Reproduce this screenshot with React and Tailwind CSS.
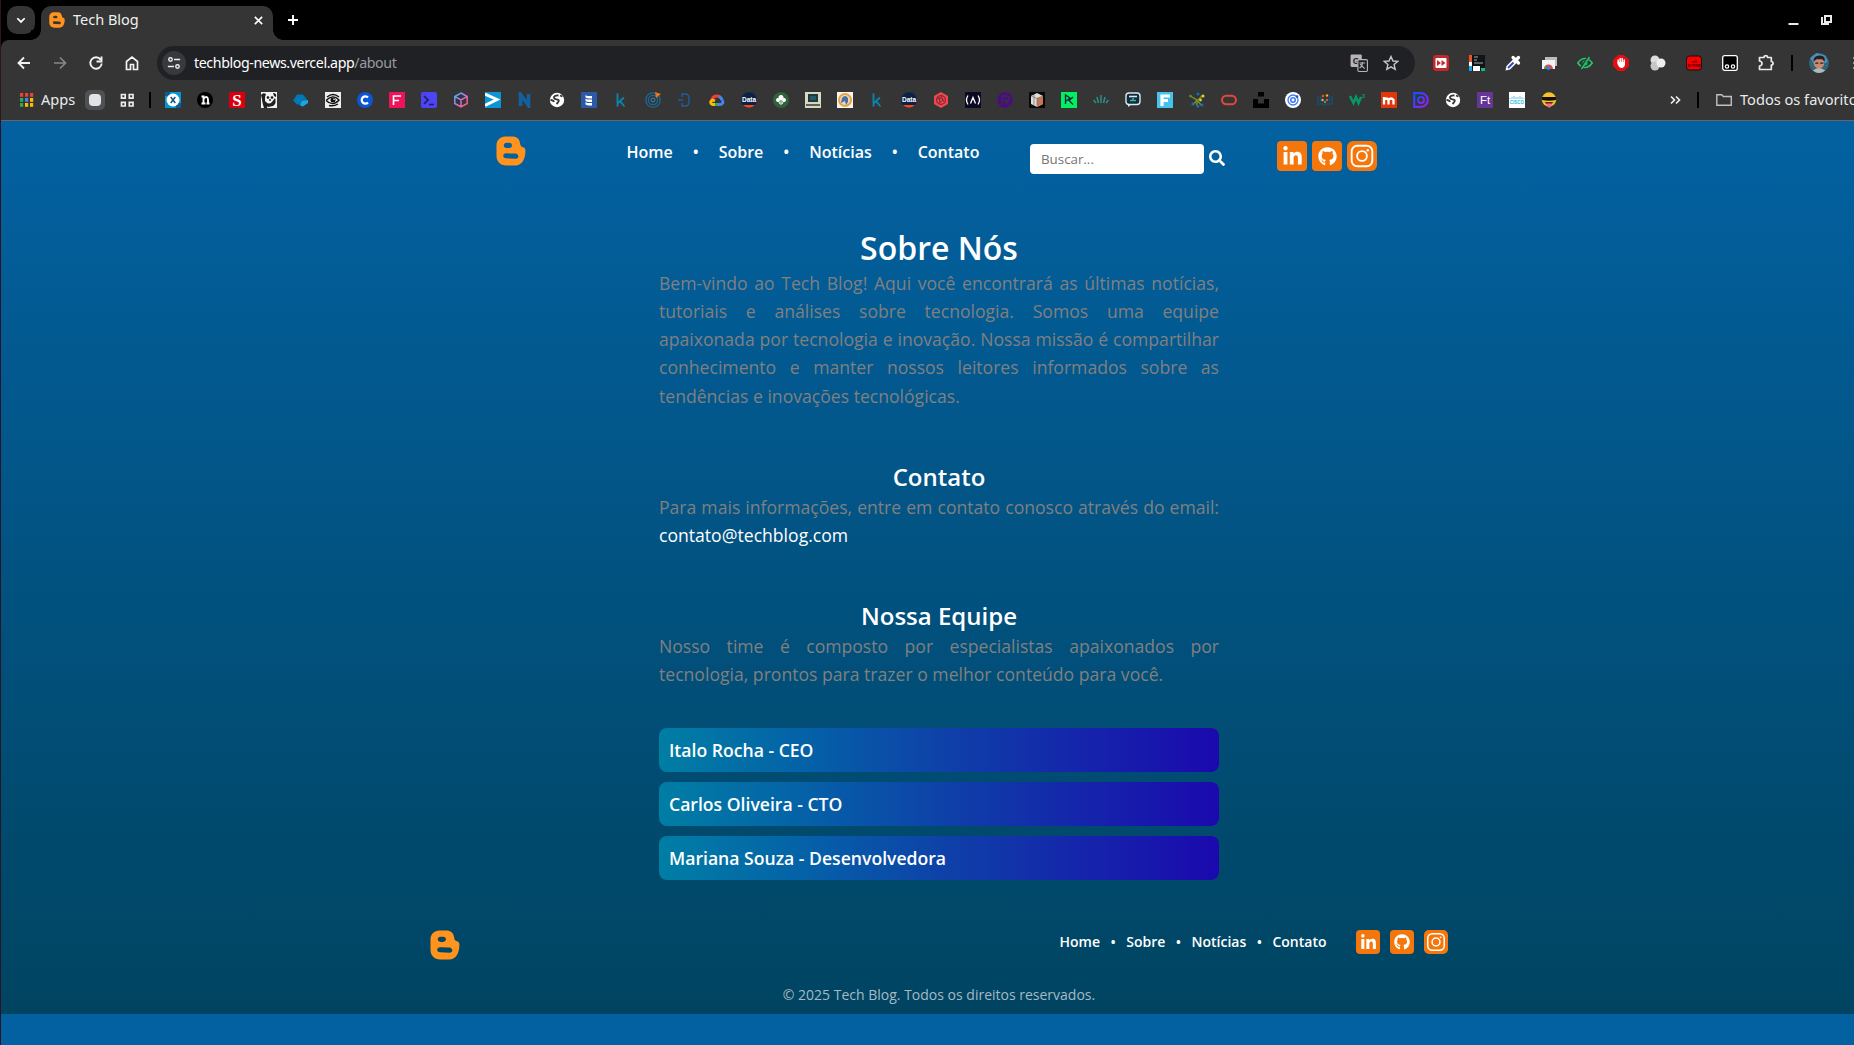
import React from "react";
import { FaGithub, FaLinkedinIn, FaSearch } from "react-icons/fa";

const Logo = ({ className }) => (
  <svg viewBox="-.5 -.2 31 30.400" className={className} fill="#ff931e" fillRule="evenodd">
    <path d="M9 0h8c5 0 7 4 7.400 7 .3 2.700 1.200 3.500 3 4 2 .5 2.600 2 2.500 4-.1 8-3.400 15-10.400 15H10C4 30 0 26 0 20V9C0 4 4 0 9 0zM10.500 6.600c-4 .2-4 5 0 5.200h2.500c4-.2 4-5 0-5.200zM10 17.400c-4 0-4 5.200 0 5.200l10 .4c4-.2 3-5-.5-5.300z" />
  </svg>
);

const Linkedin = ({ big }) => (
  <span className={`flex shrink-0 items-center justify-center rounded bg-[#f5770b] text-white ${big ? "size-[30px]" : "size-6"}`}>
    <FaLinkedinIn className={big ? "size-[21px]" : "size-[17px]"} />
  </span>
);
const Github = ({ big }) => (
  <span className={`flex shrink-0 items-center justify-center rounded bg-[#f5770b] text-white ${big ? "size-[30px]" : "size-6"}`}>
    <FaGithub className={big ? "size-[19px]" : "size-4"} />
  </span>
);
const Instagram = ({ big }) => (
  <svg viewBox="0 0 30 30" className={`shrink-0 ${big ? "size-[30px]" : "size-6"}`} fill="none" stroke="#fff">
    <rect width="30" height="30" rx="6" fill="#f5770b" stroke="none" />
    <rect x="4.700" y="4.700" width="20.600" height="20.600" rx="5.500" strokeWidth="1.900" />
    <circle cx="15" cy="15" r="4.900" strokeWidth="1.900" />
    <circle cx="20.800" cy="9.200" r="1.200" fill="#fff" stroke="none" />
  </svg>
);

const Ico = ({ children, className = "size-4" }) => (
  <svg viewBox="0 0 16 16" className={`shrink-0 ${className}`} fill="none">
    {children}
  </svg>
);

const T = ({ x = 8, y = 12.5, s = 12, f = "#fff", w = 700, serif, children }) => (
  <text x={x} y={y} fontSize={s} fill={f} fontWeight={w} textAnchor="middle" fontFamily={serif ? "Liberation Serif, serif" : "Liberation Sans, sans-serif"}>
    {children}
  </text>
);

const Globe = () => (
  <Ico>
    <circle cx="8" cy="8" r="7.200" fill="#fff" />
    <path d="M9.500 3.500c-3-.5-5 1-4.500 2.500s3.500 1 4.500 2-.5 2.500-2 4M1.500 8c2 0 3 .5 3.500 2M11 3.500l2.500 1" stroke="#353535" strokeWidth="1.800" />
  </Ico>
);
const Kaggle = () => (
  <Ico>
    <path d="M4.500 1.500v13M11 5.500L5 11M7 9.200l4.500 5.300" stroke="#0a86ab" strokeWidth="1.900" />
  </Ico>
);
const DataIcon = () => (
  <Ico>
    <circle cx="8" cy="8" r="7.800" fill="#08224a" />
    <path d="M2 13h12a8 8 0 0 1-12 0z" fill="#f04a1c" />
    <T s={6.500} y={10}>Data</T>
  </Ico>
);

const bookmarks = [
  <Ico><path d="M0 0h16v16H0z" fill="#0497d3" /><path d="M0 0h5v4H0zM11 11h5v5h-5z" fill="#0b5c97" /><circle cx="8" cy="8" r="6.500" fill="#fff" /><path d="M5.700 5l4.600 6m0-6l-4.600 6" stroke="#16507e" strokeWidth="1.500" /></Ico>,
  <Ico><circle cx="8" cy="8" r="8" fill="#000" /><path d="M4.500 4.500h2v7M6.500 6.500Q11 3 11 8v3.500M4.500 11.500h4M9.500 11.500h3" stroke="#fff" strokeWidth="1.900" /></Ico>,
  <Ico><path d="M0 0h16v16H0z" fill="#d8000f" /><T y={13.500} s={17} serif>S</T></Ico>,
  <Ico><path d="M0 0h16v16H0z" fill="#f2f2f2" /><path d="M0 3q2-3 5-1l-1 3v4l3 3-1 4H3Q1 10 1 7zM12 1q4 0 3 4l-2-1zM5 10q3 3 6 0l3-4q2 5-2 8l-5 1z" fill="#202020" /><circle cx="7" cy="5.500" r="1.300" fill="#111" /><circle cx="11" cy="5.500" r="1.300" fill="#111" /><circle cx="9" cy="8" r=".9" fill="#111" /></Ico>,
  <Ico><path d="M4 2.500h6l4 5-4 5.500-6-.5-4-4z" fill="#0078b4" /><path d="M9 9l6-1v3l-5 3.500-3-1z" fill="#1da5dc" /></Ico>,
  <Ico><path d="M0 0h16v16H0z" fill="#eee" /><path d="M2 5Q8 0 14 5M1 8.500q7-7 13-.5-6 7-13 .5M4 13.500q5 1 9-1.500" stroke="#111" strokeWidth="1.400" /><circle cx="8" cy="8" r="2.500" fill="#111" /><circle cx="9" cy="7.300" r=".8" fill="#fff" /></Ico>,
  <Ico><circle cx="8" cy="8" r="8" fill="#0b56d6" /><path d="M11 5.600A3.600 3.600 0 1 0 11 10.400" stroke="#fff" strokeWidth="2.200" /></Ico>,
  <Ico><path d="M0 0h16v16H0z" fill="#ed145b" /><path d="M4.500 13V4H12M4.500 8.500H10" stroke="#fff" strokeWidth="1.600" /></Ico>,
  <Ico><rect width="16" height="16" rx="2" fill="#4d45f5" /><path d="M3 4l4 4-4 4M8 12.500h5" stroke="#211c5c" strokeWidth="1.700" /></Ico>,
  <Ico>
    <defs><linearGradient id="cube" x1="0" y1="0" x2="1" y2="1"><stop stopColor="#1fc3f2" /><stop offset=".5" stopColor="#c870e8" /><stop offset="1" stopColor="#ff5a4e" /></linearGradient></defs>
    <path d="M8 1l6.200 3.500v7L8 15l-6.200-3.500v-7zM2 4.600L8 8l6-3.400M8 8v7" stroke="url(#cube)" strokeWidth="1.500" />
  </Ico>,
  <Ico><path d="M0 0h16v16H0z" fill="#0a95d8" /><path d="M0 2l12 5.500L0 13.500" stroke="#fff" strokeWidth="3" /></Ico>,
  <Ico><path d="M3.500 14V2.500l8 11V2" stroke="#145f9f" strokeWidth="3.600" /></Ico>,
  <Globe />,
  <Ico><rect width="16" height="16" rx="1" fill="#2c5aa8" /><path d="M4.500 2.500q0 2 6.500 1.500v2.500q-6.500 0-6.500-1.500zM4.500 6q0 2 6.500 1.500V10q-6.500 0-6.500-1.500zM4.500 9.500q0 2 6.500 1.500v2.500q-6.500 0-6.500-1.500z" fill="#fff" /></Ico>,
  <Kaggle />,
  <Ico><circle cx="8" cy="8" r="7.200" stroke="#17699b" strokeWidth="1.300" /><circle cx="8" cy="8" r="4.600" stroke="#17699b" strokeWidth="1.300" /><circle cx="8" cy="8" r="2" stroke="#2b8cc2" /><path d="M10 0l6 2-5 4z" fill="#e87722" /></Ico>,
  <Ico><path d="M5 5V2h3q4 0 4 4v4q0 4-4 4H5v-3M1 8h5" stroke="#1b5f9c" strokeWidth="1.400" /></Ico>,
  <Ico><path d="M3 8a5 5 0 0 1 8-3" stroke="#ea4335" strokeWidth="3" /><path d="M10 4.500q3 1.500 3 4" stroke="#4285f4" strokeWidth="3" /><path d="M13 8.500c2 2 0 4-2 4H8" stroke="#4285f4" strokeWidth="3" /><path d="M9 12.500H6" stroke="#34a853" strokeWidth="3" /><path d="M6 12.500H4C1 12 1 9 3.500 8L6 9" stroke="#fbbc05" strokeWidth="2.800" /></Ico>,
  <DataIcon />,
  <Ico><circle cx="8" cy="8" r="8" fill="#31623a" /><circle cx="5" cy="8" r="2" fill="#fff" /><circle cx="8" cy="5.500" r="2.500" fill="#fff" /><circle cx="11" cy="8" r="2" fill="#fff" /><path d="M8 7v6M5 8l2 4M11 8l-2 4" stroke="#fff" /></Ico>,
  <Ico><path d="M0 0h16v16H0z" fill="#d6d9bd" /><path d="M3 2h10v8H3z" fill="#233744" /><path d="M5 4h6v4H5z" fill="#225c65" /><path d="M1 12h14v2H1z" fill="#59645a" /></Ico>,
  <Ico><path d="M0 0h16v16H0z" fill="#f7f7f7" /><circle cx="8" cy="8" r="6" fill="#d8dbe0" stroke="#eda434" strokeWidth="2" /><path d="M5 6q3-4 6 0v4l-2 3-1-4-4 2z" fill="#536e93" /></Ico>,
  <Kaggle />,
  <DataIcon />,
  <Ico><path d="M8 0l7 4v8l-7 4-7-4V4z" fill="#ef4750" /><circle cx="8" cy="8" r="4.400" stroke="#842933" strokeWidth="1.200" /><path d="M8 4l2 4-4 3M4 7l5-1 2 4M6 5l1 6" stroke="#842933" /></Ico>,
  <Ico><path d="M0 0h16v16H0z" fill="#0a0a23" /><path d="M3 3.500Q0 8 3 12.500M13 3.500q3 4.500 0 9M5.500 11.500L8 5.500l2.500 6" stroke="#fff" strokeWidth="1.300" /></Ico>,
  <Ico><circle cx="8" cy="8" r="7.700" fill="#4e0a86" /><path d="M5 13V4h4q3 0 3 2.500T8 9l4 4" stroke="#353045" strokeWidth="1.800" /></Ico>,
  <Ico><path d="M0 0h16v16H0z" fill="#080808" /><path d="M2 4l6-3 6 3v8l-6 3-6-3z" fill="#e1ddd6" /><path d="M8 6v9l6-3V4z" fill="#cb7455" /><path d="M2 4l6 2.500L14 4M8 6.500V15M5 3v10" stroke="#777" strokeWidth=".8" /></Ico>,
  <Ico><path d="M0 0h16v16H0z" fill="#03ef62" /><path d="M4.500 12V3l4.500 3-4.500 3.500M12 5L8 8.500l4 4" stroke="#08283c" strokeWidth="1.300" /></Ico>,
  <Ico><path d="M8 11V3M5.500 11L4 5M10.500 11L12 5M3 11L.5 8M13 11l2.500-3" stroke="#2c8f86" strokeWidth="1.500" /></Ico>,
  <Ico><rect x="1" y="1" width="14" height="11.500" rx="3" fill="#112b40" stroke="#dce8ed" strokeWidth="1.400" /><path d="M3 12v3l4-3" fill="#dce8ed" /><path d="M4 4.500h8" stroke="#dce8ed" strokeWidth="1.600" /><path d="M8 6v3M5 8.500h6" stroke="#36b8a3" strokeWidth="1.500" /></Ico>,
  <Ico><path d="M0 0h16v16H0z" fill="#45c3ec" /><path d="M5 14V4h8M5 8.500h6" stroke="#fff" strokeWidth="3.200" /></Ico>,
  <Ico><path d="M8 14V8L1 4M8 9l6-6M8 8L5 12M8 8l4 5" stroke="#7d8f2d" strokeWidth="1.400" /><g fill="#176fc1"><circle cx="9" cy="2" r="1.500" /><circle cx="4" cy="12" r="1.600" /><circle cx="13" cy="13" r="1.500" /><circle cx="9" cy="14.500" r="1.300" /></g><g fill="#d8d42c"><circle cx="14" cy="4" r="1.500" /><circle cx="11.500" cy="8" r="1.400" /></g><circle cx="1.500" cy="4" r="1.300" fill="#4d963b" /></Ico>,
  <Ico><rect x="1" y="3.700" width="14" height="8.600" rx="4.300" stroke="#e5483d" strokeWidth="1.900" /></Ico>,
  <Ico><path d="M5 0h6v4.500H5zM0 7h5v4.500h6V7h5v9H0z" fill="#000" /></Ico>,
  <Ico><circle cx="8" cy="8" r="8" fill="#fff" /><circle cx="8" cy="8" r="5" stroke="#3a7bf2" strokeWidth="1.300" /><circle cx="8" cy="8" r="2.200" stroke="#3a7bf2" strokeWidth="1.600" /><circle cx="12" cy="4.500" r="1.300" fill="#2155c7" /></Ico>,
  <Ico><path d="M1 4v8q4-1 7 1 3-2 7-1V4M3.500 4v6M12.500 4v6" stroke="#164e72" strokeWidth="1.500" /><g fill="#e64a38"><circle cx="6" cy="4" r="1.300" /><circle cx="10" cy="8" r="1.200" /></g><g fill="#f0b429"><circle cx="10" cy="3.500" r="1.200" /><circle cx="5.500" cy="8" r="1.200" /></g><circle cx="8" cy="10" r="1.200" fill="#39a85b" /></Ico>,
  <Ico><path d="M1 4l3.500 7L7 5l2.500 6L12 5" stroke="#059862" strokeWidth="2.500" /><T x={14.300} y={6} s={6} f="#059862">3</T></Ico>,
  <Ico><path d="M0 0h16v16H0z" fill="#e2360f" /><path d="M3 12.500V5m0 3q2.500-3 4.500 0v4.500m0-4.500q2.500-3 5 0v4.500" stroke="#fff" strokeWidth="2.300" /></Ico>,
  <Ico>
    <defs><linearGradient id="dio" x1="0" y1="0" x2="1" y2="1"><stop stopColor="#144fff" /><stop offset="1" stopColor="#9d1df2" /></linearGradient></defs>
    <path d="M1.200 14.800V1.200H8a6.800 6.800 0 0 1 0 13.600z" stroke="url(#dio)" strokeWidth="2.200" /><circle cx="8" cy="8" r="3" stroke="url(#dio)" strokeWidth="2" />
  </Ico>,
  <Globe />,
  <Ico><path d="M0 0h16v16H0z" fill="#663696" /><T y={12} s={11.500} w={400}>Ft</T></Ico>,
  <Ico><path d="M0 0h16v16H0z" fill="#fff" /><path d="M1 6v1m2-2v2m2-3v3m2-2v2m2-2v2m2-3v3m2-2v2m2-1v1" stroke="#62c8e3" /><T y={12} s={4.500} f="#25b6de">CISCO</T></Ico>,
  <Ico><circle cx="8" cy="7.500" r="7.200" fill="#f8c02a" /><path d="M1 5h14v3q-7 1.500-14 0z" fill="#111" /><path d="M3.500 10h9l-2.500 2.500H6z" fill="#623000" /><path d="M6 11.500h4.500V14q-2.200 3.500-4.500 0z" fill="#f6659a" /></Ico>,
];

const extensions = [
  <Ico><rect width="16" height="16" rx="3" fill="#c3282d" /><rect x="2.500" y="3" width="11" height="10" rx="1" fill="#fff" /><path d="M4 5l4 3-4 3zM8.500 5l4 3-4 3z" fill="#c3282d" /></Ico>,
  <Ico><path d="M0 0h16v16H0z" fill="#101418" /><path d="M0 0h3v7H0z" fill="#f25022" /><path d="M0 7h3v4H0zM4 11h7v5H4z" fill="#fff" /><path d="M0 11h3v5H0z" fill="#18a3e8" /><path d="M12 13h4v3h-4z" fill="#0dbd82" /><path d="M5 2h4M5 5h3M5 8h9" stroke="#bbb" strokeWidth=".9" /></Ico>,
  <Ico><path d="M.5 15.500l1-4.500 7-7 3.500 3.500-7 7z" fill="#fff" /><path d="M3 13l5.500-5.500" stroke="#304ac7" strokeWidth="2" /><path d="M8 2.500l5.500 5.500M10.500 5.500L13.500 2.500" stroke="#fff" strokeWidth="3.200" strokeLinecap="round" /></Ico>,
  <Ico><path d="M4 2h12v9H4z" fill="#b9bcc0" /><path d="M1 5h13v9H1z" fill="#f3f3f3" /><path d="M3 14a4.500 4.500 0 0 1 9 0z" fill="#e5453a" /><path d="M3 14a5 5 0 0 1 1-3l2 3z" fill="#3ba757" /><circle cx="7.500" cy="13" r="2" fill="#397ee8" /></Ico>,
  <Ico><path d="M.8 8Q4 3.500 8 3.500T15.200 8Q12 12.500 8 12.500T.8 8z" stroke="#21c768" strokeWidth="1.600" /><circle cx="8" cy="8" r="2.500" fill="#21c768" /><path d="M3.500 14L12 2" stroke="#353535" strokeWidth="3" /><path d="M4.500 14L12.500 2" stroke="#21c768" strokeWidth="1.400" /></Ico>,
  <Ico><path d="M5 0h6l5 5v6l-5 5H5l-5-5V5z" fill="#e40d13" /><path d="M5.200 8V5m2 2.500V3.500m2 4V3.500m2 4.500V5" stroke="#fff" strokeWidth="1.500" strokeLinecap="round" /><path d="M4.500 7H12v3q-1 3-3.500 3T4.500 9z" fill="#fff" /></Ico>,
  <Ico><circle cx="5" cy="5" r="4.500" fill="#ddd" /><circle cx="5" cy="11" r="4.500" fill="#c7c7c7" /><circle cx="11" cy="8" r="4.500" fill="#eee" /></Ico>,
  <Ico><rect x=".5" y="1" width="15" height="14" rx="3" fill="#f80000" stroke="#111" /><T y={7.500} s={4} f="#500">off</T><T y={11.500} s={3.500} f="#500">SCRIBE</T></Ico>,
  <Ico><rect x=".7" y=".7" width="14.600" height="14.600" rx="2" fill="#000" stroke="#fff" strokeWidth="1.300" /><circle cx="5" cy="11.500" r="1.700" stroke="#fff" strokeWidth="1.200" /><circle cx="11" cy="11.500" r="1.700" stroke="#fff" strokeWidth="1.200" /></Ico>,
  <Ico><path d="M1.500 2.500H6a1.800 1.800 0 0 1 3.600 0h3.700v4a1.700 1.700 0 0 1 0 3.500v4.500H1.500V11a2.500 2.500 0 0 0 0-5z" stroke="#e8eaed" strokeWidth="1.700" strokeLinejoin="round" /></Ico>,
];

const Tabs = () => (
  <div className="flex h-10 items-start bg-black pl-1.5 pt-1.5">
    <div className="flex size-7 items-center justify-center rounded-[10px] bg-[#353535]">
      <Ico className="size-3.5"><path d="M3.800 6L8 10.200 12.200 6" stroke="#fff" strokeWidth="2" /></Ico>
    </div>
    <div className="relative ml-1.5 flex h-[34px] w-[232px] items-center rounded-t-[10px] bg-[#353535] pb-[6px] pl-2 pr-2">
      <span className="absolute -left-2.5 bottom-0 size-2.5 bg-[radial-gradient(circle_at_0_0,black_9.500px,#353535_10px)]" />
      <span className="absolute -right-2.5 bottom-0 size-2.5 bg-[radial-gradient(circle_at_100%_0,black_9.500px,#353535_10px)]" />
      <Logo className="size-4" />
      <span className="-mt-px ml-2 text-[14.500px] text-[#f0f0f0]">Tech Blog</span>
      <Ico className="ml-auto size-[13px]"><path d="M3.500 3.500l9 9m0-9l-9 9" stroke="#fff" strokeWidth="2" /></Ico>
    </div>
    <Ico className="ml-3 mt-1.5 size-4"><path d="M8 3v10M3 8h10" stroke="#fff" strokeWidth="1.900" /></Ico>
    <div className="ml-[1484px] mt-[5px] flex gap-[17px]">
      <Ico className="size-4"><path d="M3.500 13h10" stroke="#e8eaed" strokeWidth="2" /></Ico>
      <Ico className="size-4"><path d="M7 5h6v6H7z" stroke="#e8eaed" strokeWidth="2" /><path d="M4 6v7h7" stroke="#e8eaed" strokeWidth="2" /></Ico>
    </div>
  </div>
);

const Toolbar = () => (
  <div className="flex h-[46px] items-center">
    <Ico className="ml-[15px] size-4"><path d="M14 8H3M8 2.500L2.500 8 8 13.500" stroke="#f1f3f4" strokeWidth="1.800" /></Ico>
    <Ico className="ml-5 size-4"><path d="M2 8h11M8 2.500L13.500 8 8 13.500" stroke="#85868a" strokeWidth="1.700" /></Ico>
    <Ico className="ml-5 size-4"><path d="M12.600 4.600A5.700 5.700 0 1 0 13.700 8.500M13.500 1.500v5h-5" stroke="#f1f3f4" strokeWidth="1.900" /></Ico>
    <Ico className="ml-5 size-4"><path d="M2.500 14.500v-8L8 2l5.500 4.500v8h-4v-5h-3v5z" stroke="#f1f3f4" strokeWidth="1.700" /></Ico>
    <div className="ml-[17px] flex h-[34px] w-[1258px] shrink-0 items-center rounded-full bg-[#202125] pl-[5px] pr-4">
      <span className="flex size-6 items-center justify-center rounded-full bg-[#38393c]">
        <Ico className="size-3.5"><path d="M8 4h7M1 12h7" stroke="#eee" strokeWidth="1.700" /><circle cx="4" cy="4" r="2" stroke="#eee" strokeWidth="1.600" /><circle cx="12" cy="12" r="2" stroke="#eee" strokeWidth="1.600" /></Ico>
      </span>
      <span className="ml-2 text-[14.200px] tracking-[-0.390px] text-[#9a9b9e]"><span className="text-white">techblog-news.vercel.app</span>/about</span>
      <Ico className="ml-auto size-[18px]"><rect x=".5" y=".5" width="10" height="11" rx="1" fill="#b4b5b8" /><T x={5.500} y={9} s={8} f="#202125">G</T><rect x="7" y="5" width="8.500" height="10.500" rx="1" stroke="#b4b5b8" fill="#202125" /><path d="M8.500 8h5M11 7v1q0 3-2.500 4.500M9 9l4 4" stroke="#b4b5b8" /></Ico>
      <Ico className="ml-[15px] size-4"><path d="M8 1.500l2 4.500 4.700.4-3.600 3.200 1.100 4.700L8 11.800l-4.200 2.500 1.100-4.700L1.300 6.400 6 6z" stroke="#c7c8ca" strokeWidth="1.400" /></Ico>
    </div>
    <div className="ml-[18px] flex shrink-0 gap-[20.100px]">{extensions.map((e, i) => <React.Fragment key={i}>{e}</React.Fragment>)}</div>
    <span className="ml-[17px] h-4 w-0.5 shrink-0 bg-black" />
    <Ico className="ml-4 size-5"><circle cx="8" cy="8" r="8" fill="#32647c" /><path d="M1 4l5-4 7 2 2 5-2 1-9 1z" fill="#4c91b8" /><path d="M4 6q3-5 8 0v4q-4 5-8 0z" fill="#c88972" /><path d="M3.500 7q0-5 5-5t4 5l-2-2H6z" fill="#271f24" /><path d="M5 8h2.500M9 8h2.500" stroke="#222" /><path d="M3 14q5-4 10 0-5 4-10 0z" fill="#b3b8b7" /></Ico>
    <span className="ml-6 flex shrink-0 flex-col gap-[3px]"><i className="size-0.5 bg-[#999]" /><i className="size-0.5 bg-[#999]" /><i className="size-0.5 bg-[#999]" /></span>
  </div>
);

const appColors = ["#ea4335", "#ea4335", "#ea4335", "#34a853", "#4285f4", "#fbbc05", "#34a853", "#fbbc05", "#fbbc05"];

const Bookmarks = () => (
  <div className="flex h-[34px] items-center pb-[6px]">
    <Ico className="ml-[17px] size-4">
      {appColors.map((c, i) => <rect key={i} x={2 + (i % 3) * 5} y={1 + Math.floor(i / 3) * 5} width="3.200" height="3.800" fill={c} />)}
    </Ico>
    <span className="ml-[7px] w-[34px] text-[14.600px] text-[#e8eaed]">Apps</span>
    <span className="ml-[10px] flex size-5 shrink-0 items-center justify-center rounded-[5px] bg-[#505154]"><i className="size-3 rounded-sm bg-[#e2e3e7]" /></span>
    <Ico className="ml-3.5 size-4"><path d="M2.500 2.500h3.700v3.700H2.500zM10.300 2.500H14v3.700h-3.700zM2.500 10.300h3.700V14H2.500zM10.300 10.300H14V14h-3.700z" stroke="#eee" strokeWidth="1.700" /></Ico>
    <span className="ml-[14px] h-4 w-0.5 shrink-0 bg-black" />
    <div className="ml-[14px] flex shrink-0 gap-4">{bookmarks.map((b, i) => <React.Fragment key={i}>{b}</React.Fragment>)}</div>
    <Ico className="ml-[110px] size-4"><path d="M4 4.500L7.500 8 4 11.500M9 4.500L12.500 8 9 11.500" stroke="#eee" strokeWidth="1.700" /></Ico>
    <span className="ml-[14px] h-4 w-0.5 shrink-0 bg-black" />
    <Ico className="ml-[17px] size-4"><path d="M.8 13.200V2.800h5l1.500 1.700h8v8.700z" stroke="#bfc0c2" strokeWidth="1.400" /></Ico>
    <span className="ml-[8px] shrink-0 whitespace-nowrap text-[14.600px] text-[#e8eaed]">Todos os favoritos</span>
  </div>
);

const links = ["Home", "Sobre", "Notícias", "Contato"];
const team = ["Italo Rocha - CEO", "Carlos Oliveira - CTO", "Mariana Souza - Desenvolvedora"];

const Page = () => (
  <div className="h-[924px] bg-[#0361a1]">
    <div className="flex h-[893px] flex-col bg-[linear-gradient(180deg,#0361a1_0%,#004461_100%)] text-white">
      <header className="flex h-[105px] items-start pl-[495px]">
        <Logo className="mt-[15px] size-[30px]" />
        <nav className="ml-[100.500px] mt-[19px] flex w-[353px] shrink-0 items-center justify-between text-base font-semibold">
          {links.map((l, i) => <React.Fragment key={l}>{i > 0 && <span>•</span>}<a>{l}</a></React.Fragment>)}
        </nav>
        <div className="ml-[50.500px] mt-[23px] flex h-[30px] w-[174px] shrink-0 items-center rounded bg-white pl-[11px] pt-0.5 text-[13.333px] text-[#757575]">Buscar...</div>
        <FaSearch className="ml-[5px] mt-[29px] size-4 shrink-0" />
        <div className="ml-[52px] mt-5 flex gap-[5px]"><Linkedin big /><Github big /><Instagram big /></div>
      </header>
      <main className="ml-[658px] w-[560px] text-justify text-[17.600px] leading-[28.160px] text-[#808080]">
        <section>
          <h1 className="text-center text-[32px] font-semibold leading-[43px] text-white">Sobre Nós</h1>
          <p>Bem-vindo ao Tech Blog! Aqui você encontrará as últimas notícias, tutoriais e análises sobre tecnologia. Somos uma equipe apaixonada por tecnologia e inovação. Nossa missão é compartilhar conhecimento e manter nossos leitores informados sobre as tendências e inovações tecnológicas.</p>
        </section>
        <section className="mt-[50.200px]">
          <h2 className="text-center text-2xl font-semibold leading-[33px] text-white">Contato</h2>
          <p>Para mais informações, entre em contato conosco através do email: <a className="text-white">contato@techblog.com</a></p>
        </section>
        <section className="mt-[49.500px]">
          <h2 className="text-center text-2xl font-semibold leading-[33px] text-white">Nossa Equipe</h2>
          <p>Nosso time é composto por especialistas apaixonados por tecnologia, prontos para trazer o melhor conteúdo para você.</p>
        </section>
        <ul className="mt-[39.800px] flex flex-col gap-2.5">
          {team.map((t) => (
            <li key={t} className="rounded-lg bg-[linear-gradient(90deg,#007ea4_0%,#0560a8_27%,#0f3ca8_55%,#1b09ae_100%)] p-2.5 text-left font-semibold leading-6 text-white">{t}</li>
          ))}
        </ul>
      </main>
      <footer className="mt-auto h-[84px]">
        <div className="flex items-start pl-[429px]">
          <Logo className="size-[30px]" />
          <nav className="ml-[599.500px] mt-0.5 flex w-[267px] shrink-0 items-center justify-between text-[14px] font-semibold leading-5">
            {links.map((l, i) => <React.Fragment key={l}>{i > 0 && <span>•</span>}<a>{l}</a></React.Fragment>)}
          </nav>
          <div className="ml-[29.500px] flex gap-2.5"><Linkedin /><Github /><Instagram /></div>
        </div>
        <p className="mt-[25px] text-center text-[14px] leading-5 text-[#a6bac5]">© 2025 Tech Blog. Todos os direitos reservados.</p>
      </footer>
    </div>
  </div>
);

export default function App() {
  return (
    <div className="h-[1045px] w-[1854px] overflow-hidden bg-[#2c1522] pl-px font-['Open_Sans',sans-serif]">
      <div className="w-[1876px]">
        <div className="bg-black font-['Noto_Sans',sans-serif]">
          <Tabs />
          <div className="h-[81px] rounded-tl-lg border-b border-[#656667] bg-[#353535]">
            <Toolbar />
            <Bookmarks />
          </div>
        </div>
        <Page />
      </div>
    </div>
  );
}
